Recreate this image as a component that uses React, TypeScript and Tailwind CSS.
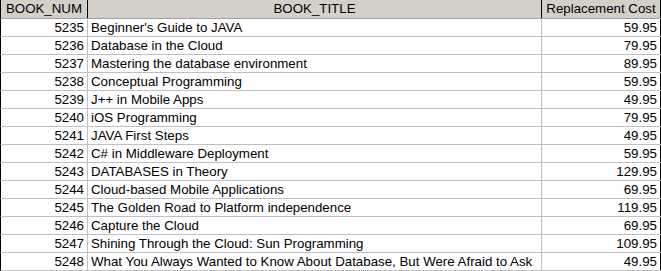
const books = [
  { num: 5235, title: "Beginner's Guide to JAVA", cost: "59.95" },
  { num: 5236, title: "Database in the Cloud", cost: "79.95" },
  { num: 5237, title: "Mastering the database environment", cost: "89.95" },
  { num: 5238, title: "Conceptual Programming", cost: "59.95" },
  { num: 5239, title: "J++ in Mobile Apps", cost: "49.95" },
  { num: 5240, title: "iOS Programming", cost: "79.95" },
  { num: 5241, title: "JAVA First Steps", cost: "49.95" },
  { num: 5242, title: "C# in Middleware Deployment", cost: "59.95" },
  { num: 5243, title: "DATABASES in Theory", cost: "129.95" },
  { num: 5244, title: "Cloud-based Mobile Applications", cost: "69.95" },
  { num: 5245, title: "The Golden Road to Platform independence", cost: "119.95" },
  { num: 5246, title: "Capture the Cloud", cost: "69.95" },
  { num: 5247, title: "Shining Through the Cloud: Sun Programming", cost: "109.95" },
  {
    num: 5248,
    title: "What You Always Wanted to Know About Database, But Were Afraid to Ask",
    cost: "49.95",
  },
];

export default function App() {
  return (
    <div className="h-[271px] w-[661px] overflow-hidden bg-white font-['Liberation_Sans',Arial,sans-serif] text-[13.3px] leading-none text-black">
      <div className="flex h-[19px] border-b border-[#a0a0a0] border-l border-l-black bg-[#d4d0c8]">
        <div className="flex w-[87px] items-center justify-center border-r border-black">BOOK_NUM</div>
        <div className="flex w-[454px] items-center justify-center border-r border-black">BOOK_TITLE</div>
        <div className="flex w-[119px] items-center justify-center border-r border-black">Replacement Cost</div>
      </div>
      {books.map((b) => (
        <div key={b.num} className="flex h-[18px] border-b border-[#c0c0c0] border-l border-l-black">
          <div className="flex w-[87px] items-center justify-end border-r border-[#c0c0c0] pr-[3px]">{b.num}</div>
          <div className="flex w-[454px] items-center border-r border-[#c0c0c0] pl-[3px] whitespace-nowrap">{b.title}</div>
          <div className="flex w-[119px] items-center justify-end border-r border-black pr-[3px]">{b.cost}</div>
        </div>
      ))}
    </div>
  );
}
